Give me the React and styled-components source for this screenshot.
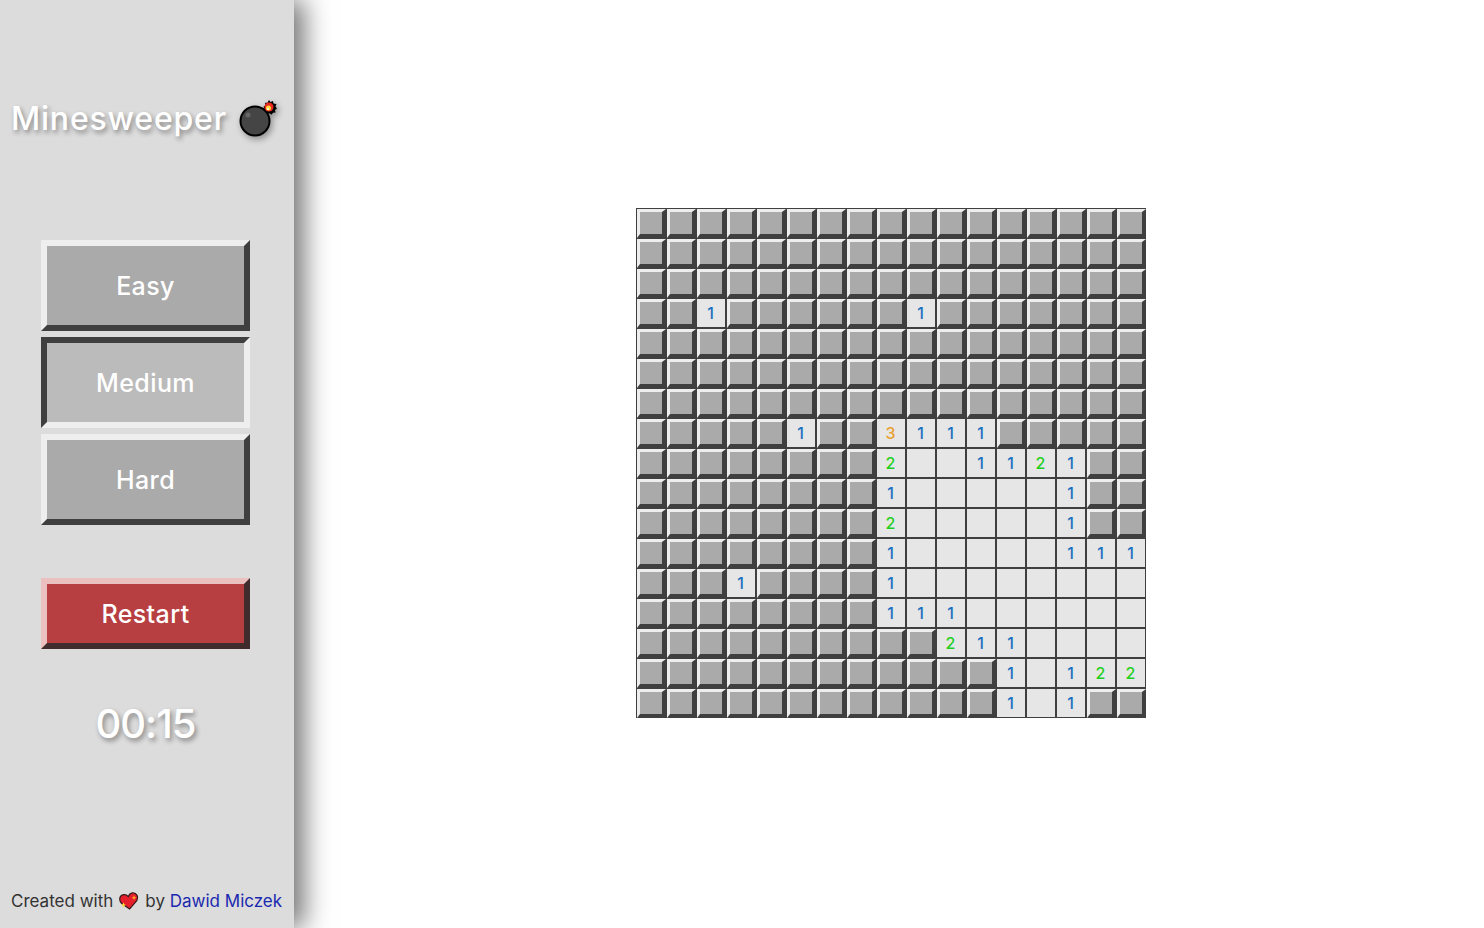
import React from "react";
import styled, { createGlobalStyle } from "styled-components";

const GlobalStyle = createGlobalStyle`
	html, body {
		margin: 0;
		padding: 0;
		height: 100%;
		background: #fff;
		font-family: "Inter", sans-serif;
	}
	* {
		box-sizing: border-box;
	}
`;

// u = unrevealed, 0 = empty, otherwise the number shown
const BOARD = [
	"uuuuuuuuuuuuuuuuu",
	"uuuuuuuuuuuuuuuuu",
	"uuuuuuuuuuuuuuuuu",
	"uu1uuuuuu1uuuuuuu",
	"uuuuuuuuuuuuuuuuu",
	"uuuuuuuuuuuuuuuuu",
	"uuuuuuuuuuuuuuuuu",
	"uuuuu1uu3111uuuuu",
	"uuuuuuuu2001121uu",
	"uuuuuuuu1000001uu",
	"uuuuuuuu2000001uu",
	"uuuuuuuu100000111",
	"uuu1uuuu100000000",
	"uuuuuuuu111000000",
	"uuuuuuuuuu2110000",
	"uuuuuuuuuuuu10122",
	"uuuuuuuuuuuu101uu",
];

const LEVELS = ["Easy", "Medium", "Hard"];

function BombIcon() {
	return (
		<BombSvg width="38" height="38" viewBox="0 0 38 38">
			<path d="M22 15l6-6" stroke="#000" strokeWidth="5" />
			<path d="M22 15l6-6" stroke="#999" strokeWidth="2.500" />
			<circle cx="16" cy="22" r="15.500" fill="#000" />
			<circle cx="16" cy="22" r="13.500" fill="#454545" />
			<circle cx="9" cy="16" r="2.500" fill="#666" />
			<path
				d="M30 1l1.500 2 2.500-1 .5 2.500 3 .5-1 2.500 1.500 2-2 1.500.5 2.500-2.500.2-1.500 2-2-1.500-2.500 1-.5-2.500-2.500-.5 1-2.500-1.500-2 2-1.500-.5-2.500 2.500 0z"
				fill="#000"
			/>
			<circle cx="30" cy="8" r="4.500" fill="#e8281e" />
			<circle cx="29.500" cy="9" r="2.500" fill="#ffd83a" />
			<circle cx="29" cy="10" r="1" fill="#fff" />
		</BombSvg>
	);
}

function HeartIcon() {
	return (
		<svg width="20" height="18" viewBox="0 0 20 18">
			<g transform="rotate(-8 10 9)">
				<path
					d="M9.500 17L2.500 10.500C-.5 6.500 1.500 2 5.500 2 7.500 2 9 3 10 4.500 11 2.500 12.500 1.500 14.500 1.500 18.500 1.500 20.500 6 17.500 10z"
					fill="#e5202c"
					stroke="#3a1a1a"
					strokeWidth="1.200"
				/>
			</g>
			<path d="M15 3.500l.7 1.500 1.500.7-1.500.7-.7 1.500-.7-1.500-1.500-.7 1.500-.7z" fill="#ffb020" />
			<path d="M4.500 10.500l.8 1.700 1.700.8-1.700.8-.8 1.700-.8-1.700-1.700-.8 1.700-.8z" fill="#ffe030" />
		</svg>
	);
}

export default function App() {
	return (
		<>
			<GlobalStyle />
			<Page>
				<Sidebar>
					<Title>
						<TitleText>Minesweeper</TitleText>
						<BombIcon />
					</Title>
					<Levels>
						{LEVELS.map((level) => (
							<LevelButton key={level} $pressed={level === "Medium"}>
								{level}
							</LevelButton>
						))}
					</Levels>
					<RestartButton>Restart</RestartButton>
					<Timer>00:15</Timer>
					<Footer>
						Created with
						<HeartIcon />
						<span>
							by <AuthorLink href="#">Dawid Miczek</AuthorLink>
						</span>
					</Footer>
				</Sidebar>
				<Main>
					<Board>
						{BOARD.join("")
							.split("")
							.map((cell, i) =>
								cell === "u" ? (
									<HiddenCell key={i} />
								) : (
									<OpenCell key={i} $value={cell}>
										{cell !== "0" && cell}
									</OpenCell>
								)
							)}
					</Board>
				</Main>
			</Page>
		</>
	);
}

const Page = styled.div`
	display: flex;
	height: 100vh;
	min-height: 928px;
	overflow: hidden;
`;

const Sidebar = styled.aside`
	flex: 0 0 294px;
	display: flex;
	flex-direction: column;
	align-items: center;
	padding-right: 3px;
	background: #dcdcdc;
	box-shadow: 10px 0 25px rgba(0, 0, 0, 0.55);
	position: relative;
`;

const Title = styled.h1`
	display: flex;
	align-items: center;
	gap: 12px;
	height: 38px;
	margin: 99px 0 0;
	width: 100%;
	padding-left: 11px;
	font-weight: 500;
`;

const TitleText = styled.span`
	font-size: 32px;
	letter-spacing: 0.8px;
	color: #fff;
	text-shadow: 2px 3px 5px rgba(0, 0, 0, 0.4);
`;

const BombSvg = styled.svg`
	flex: none;
	filter: drop-shadow(2px 3px 3px rgba(0, 0, 0, 0.35));
`;

const Levels = styled.div`
	display: flex;
	flex-direction: column;
	gap: 6px;
	margin-top: 103px;
`;

const bevel = (light, dark) => `
	border-style: solid;
	border-width: 6px;
	border-color: ${light} ${dark} ${dark} ${light};
`;

const BaseButton = styled.button`
	display: block;
	width: 209px;
	padding: 0;
	font-family: "Inter", sans-serif;
	font-size: 25px;
	font-weight: 500;
	letter-spacing: 0.4px;
	color: #fff;
	cursor: pointer;
	outline: none;
`;

const LevelButton = styled(BaseButton)`
	height: 91px;
	background: ${(p) => (p.$pressed ? "#bbbbbb" : "#aaaaaa")};
	${(p) => (p.$pressed ? bevel("#3f3f3f", "#eeeeee") : bevel("#eeeeee", "#3f3f3f"))}
`;

const RestartButton = styled(BaseButton)`
	height: 71px;
	margin-top: 53px;
	background: #b83f41;
	${bevel("#edc0c0", "#402c2c")}
`;

const Timer = styled.div`
	margin-top: 50px;
	font-size: 40px;
	font-weight: 500;
	line-height: 50px;
	letter-spacing: -1px;
	color: #fff;
	text-shadow: 2px 3px 5px rgba(0, 0, 0, 0.4);
`;

const Footer = styled.footer`
	position: absolute;
	left: 11px;
	bottom: 17px;
	display: flex;
	align-items: center;
	gap: 6px;
	height: 20px;
	white-space: nowrap;
	font-size: 17px;
	color: #333;
`;

const AuthorLink = styled.a`
	color: #1a28b0;
	text-decoration: none;
`;

const Main = styled.main`
	flex: 1;
	display: flex;
	justify-content: center;
	padding: 208px 0 0 4px;
`;

const Board = styled.div`
	display: grid;
	grid-template-columns: repeat(17, 30px);
	grid-auto-rows: 30px;
	width: 510px;
	height: 510px;
	background: #3f3f3f;
`;

const HiddenCell = styled.div`
	margin: 1px 0 0 1px;
	background: #aaaaaa;
	border-style: solid;
	border-width: 3px 4px 4px 3px;
	border-color: #eeeeee #3f3f3f #3f3f3f #eeeeee;
`;

const NUMBER_COLORS = {
	1: "#1a6fc0",
	2: "#1fd01f",
	3: "#e8a030",
};

const OpenCell = styled.div`
	display: flex;
	align-items: center;
	justify-content: center;
	padding-right: 1px;
	background: #e6e6e6;
	border: 1px solid #3f3f3f;
	font-size: 16px;
	font-weight: 500;
	color: ${(p) => NUMBER_COLORS[p.$value]};
`;
